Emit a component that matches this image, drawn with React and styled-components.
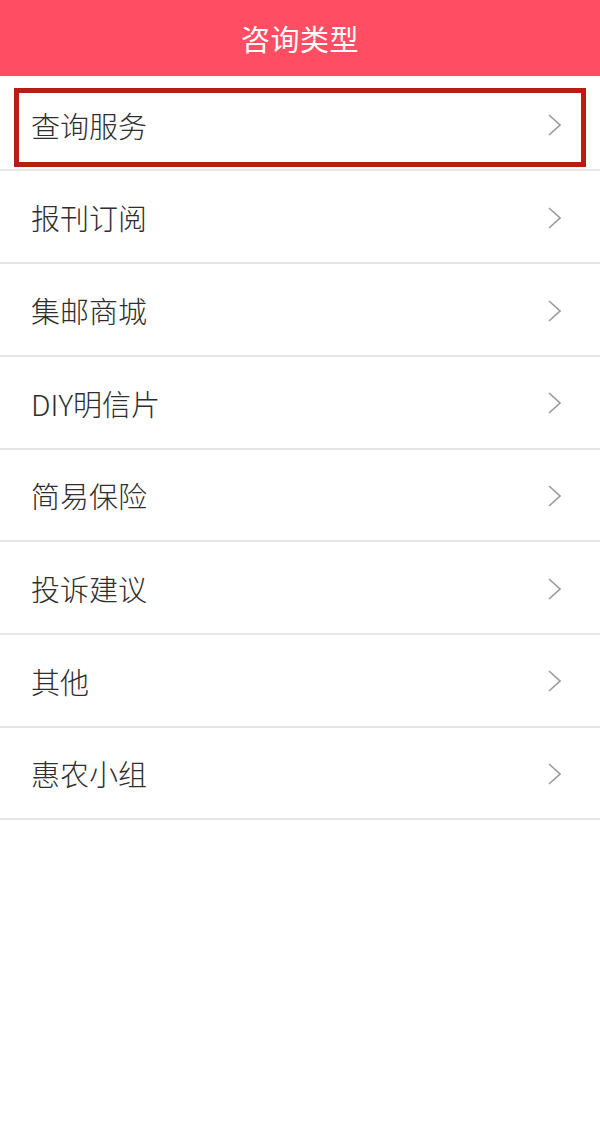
import React from "react";
import styled, { createGlobalStyle } from "styled-components";

const GlobalStyle = createGlobalStyle`
  html, body {
    margin: 0;
    padding: 0;
    background: #ffffff;
  }
  body {
    font-family: "Noto Sans CJK SC", "Noto Sans", sans-serif;
  }
`;

const Page = styled.div`
  width: 600px;
  min-height: 1130px;
  background: #ffffff;
  display: flex;
  flex-direction: column;
`;

const Header = styled.header`
  height: 76px;
  background-color: #ff4d64;
  display: flex;
  align-items: center;
  justify-content: center;
  color: #ffffff;
  font-size: 29px;
  letter-spacing: 0.5px;
`;

const List = styled.ul`
  list-style: none;
  margin: 0;
  padding: 2.8px 0 0;
`;

const Row = styled.li`
  position: relative;
  box-sizing: border-box;
  height: 92.7px;
  border-bottom: 2px solid #e6e6e6;
  display: flex;
  align-items: center;
  justify-content: space-between;
  padding: 2px 39px 0 31px;
  font-size: 29px;
  font-weight: 300;
  color: #2e2e2e;

  &::after {
    content: "";
    display: ${(props) => (props.$marked ? "block" : "none")};
    position: absolute;
    top: 9px;
    left: 14px;
    right: 14px;
    bottom: 2px;
    border: 5px solid #b81c12;
  }
`;

const Label = styled.span`
  line-height: 1;
`;

const Chevron = () => (
  <svg width="13" height="24" viewBox="0 0 13 24" fill="none">
    <path d="M1 2 L12 12 L1 22" stroke="#9a9a9a" strokeWidth="1.6" />
  </svg>
);

const items = [
  "查询服务",
  "报刊订阅",
  "集邮商城",
  "DIY明信片",
  "简易保险",
  "投诉建议",
  "其他",
  "惠农小组",
];

const App = () => {
  return (
    <>
      <GlobalStyle />
      <Page>
        <Header>咨询类型</Header>
        <List>
          {items.map((item, i) => (
            <Row key={item} $marked={i === 0}>
              <Label>{item}</Label>
              <Chevron />
            </Row>
          ))}
        </List>
      </Page>
    </>
  );
};

export default App;
